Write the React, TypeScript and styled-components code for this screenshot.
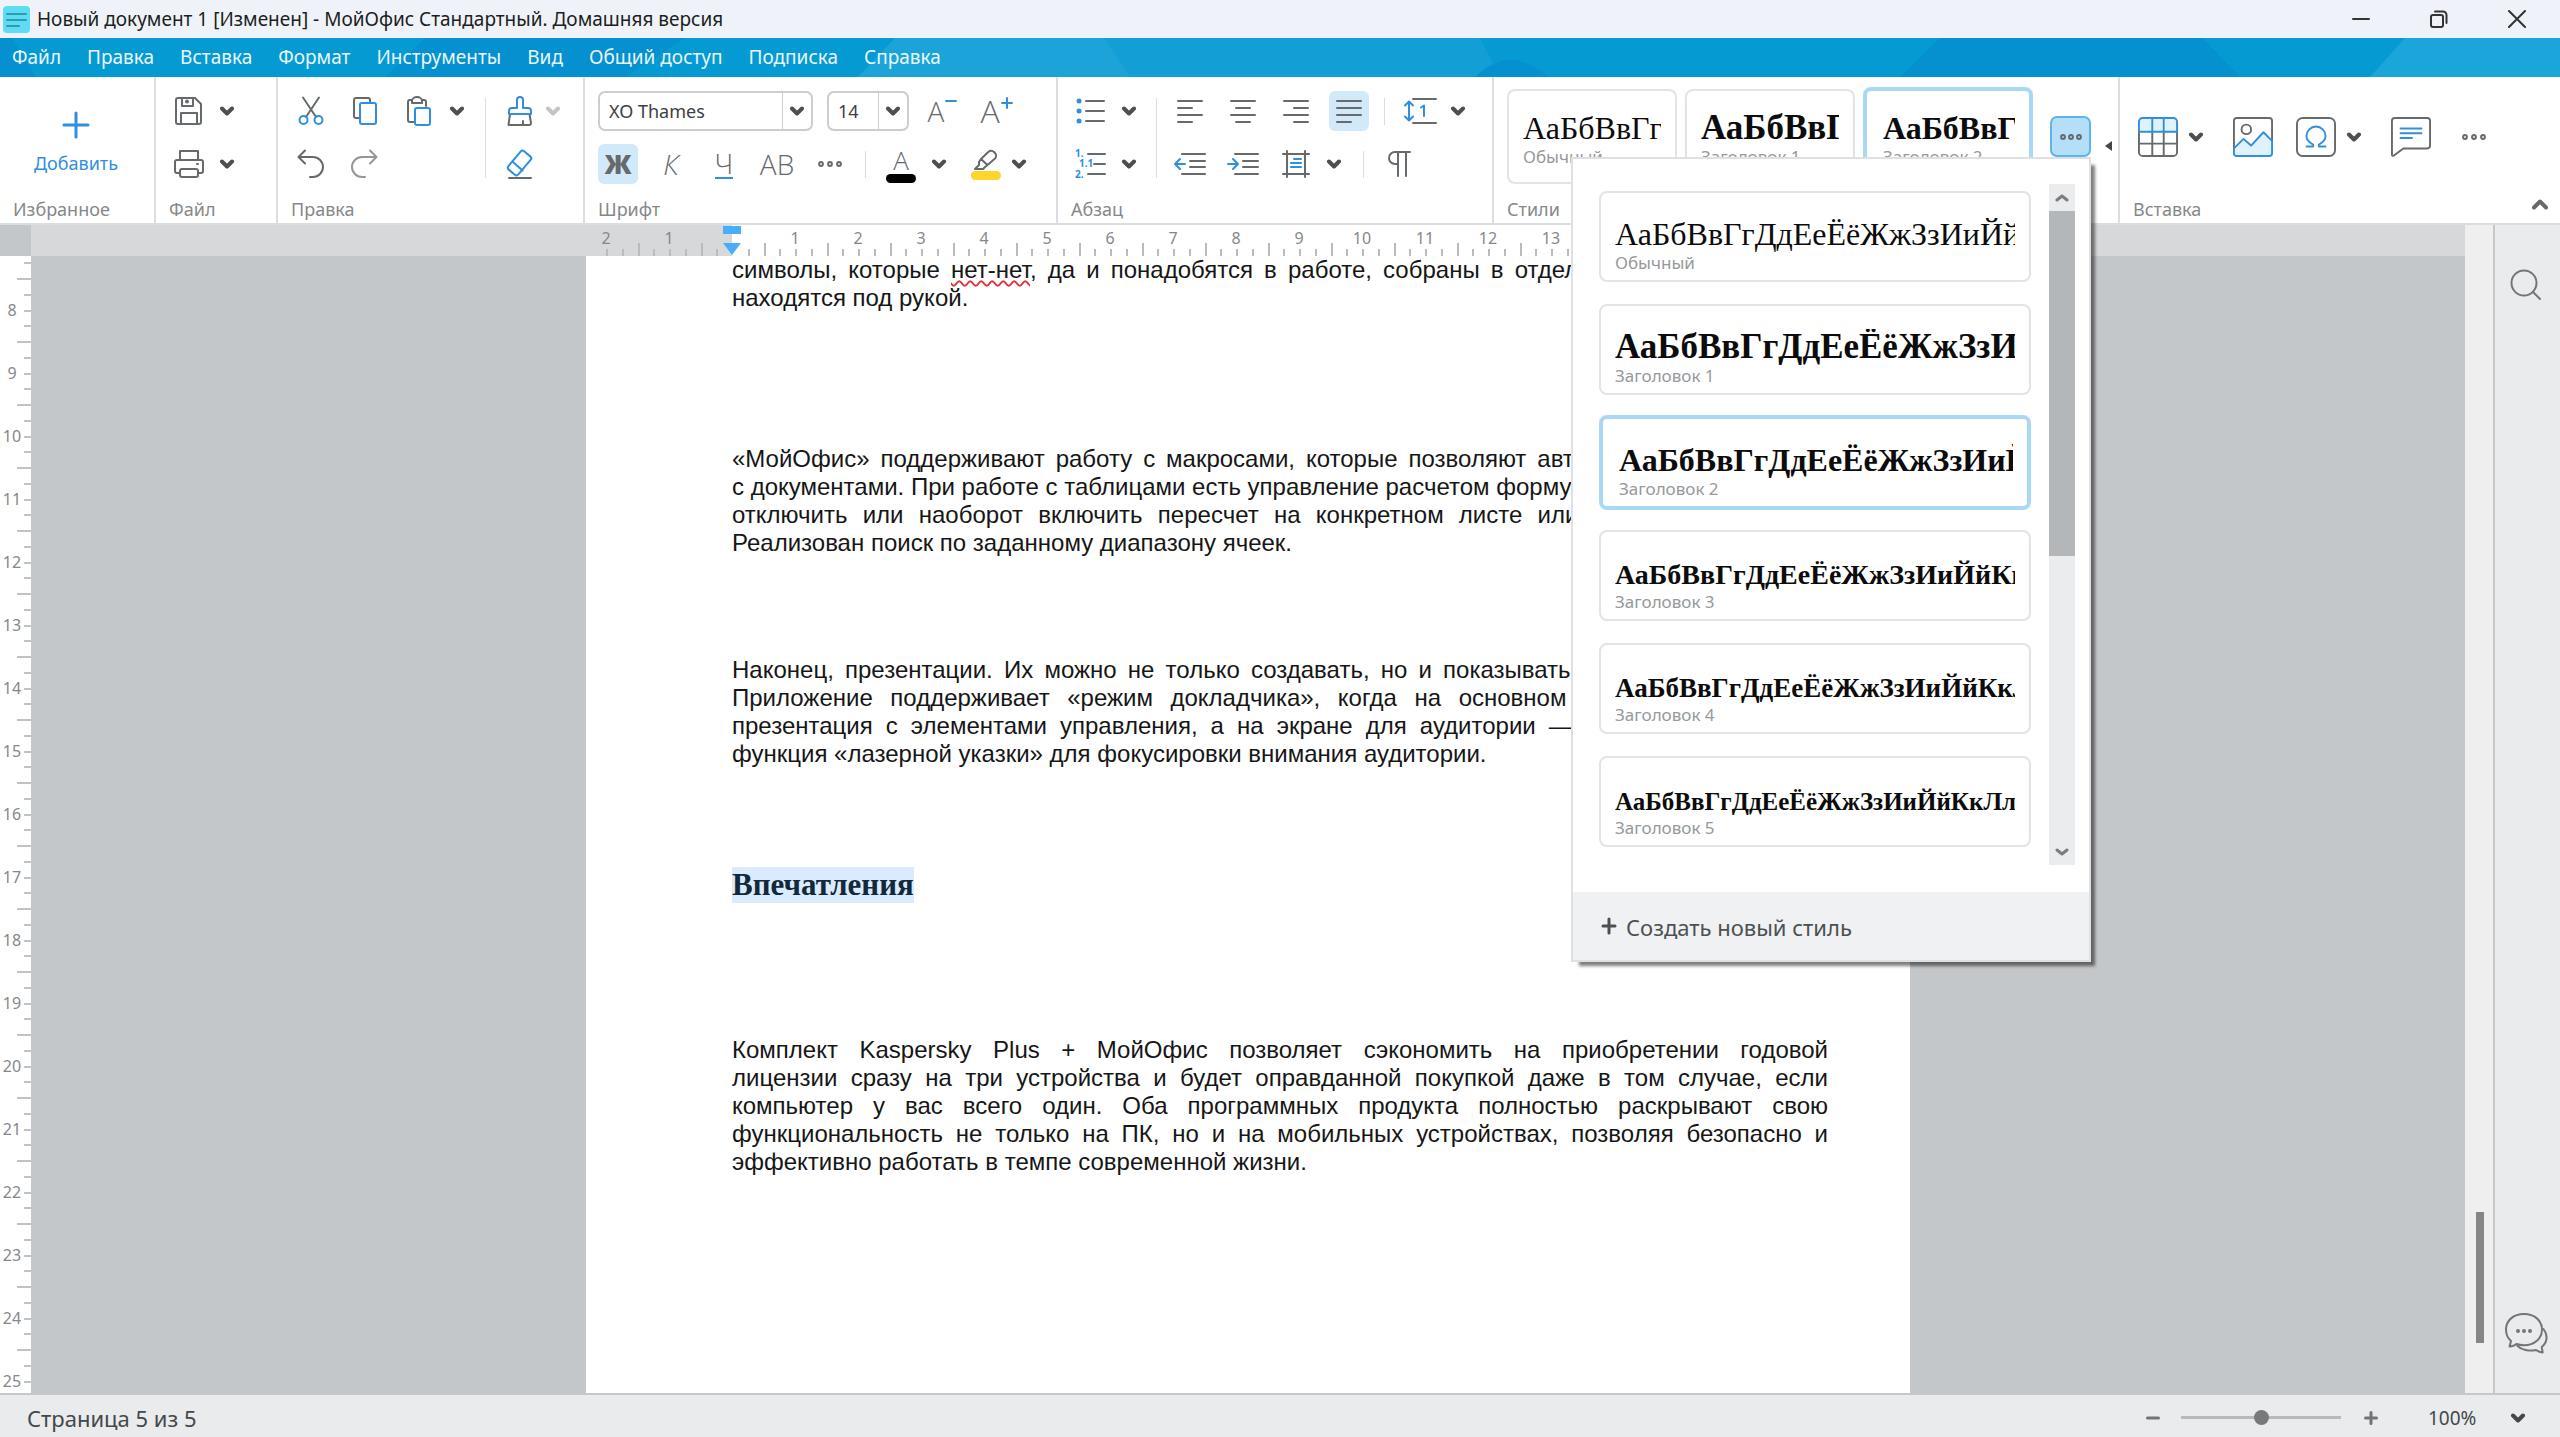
import React from "react";
import styled, { createGlobalStyle, css } from "styled-components";

const UI = `"Noto Sans", "Open Sans", sans-serif`;
const SERIF = `"Liberation Serif", "Times New Roman", serif`;
const SANS = `"Liberation Sans", Arial, sans-serif`;

const GRAY = "#666a6c";
const DARK = "#44484a";
const BLUE = "#2f8fdd";
const LINE = "#dcddde";

const CM = 63;

const GlobalStyle = createGlobalStyle`
  * { box-sizing: border-box; }
  body { margin: 0; font-family: ${UI}; color: #333; overflow: hidden; }
  button, select, input { font: inherit; color: inherit; margin: 0; padding: 0; border: 0; background: none; }
`;

const Window = styled.div`
  display: flex;
  flex-direction: column;
  height: 100vh;
  background: #fff;
`;

/* ---------- title bar ---------- */

const TitleBar = styled.header`
  display: flex;
  align-items: center;
  height: 38px;
  padding: 0 4px 0 3px;
  gap: 7px;
  background: #eff3f9;
`;

const Title = styled.h1`
  flex: 1;
  margin: 0;
  font-size: 19px;
  font-weight: 400;
  line-height: 24px;
  color: #1c1e20;
`;

const WindowButton = styled.button`
  display: flex;
  align-items: center;
  justify-content: center;
  width: 78px;
  height: 38px;
`;

/* ---------- menu ---------- */

const MenuBar = styled.nav`
  position: relative;
  display: flex;
  align-items: center;
  gap: 26px;
  height: 39px;
  padding: 0 12px 1px;
  background: #069ad3;
`;

const MenuPattern = styled.svg`
  position: absolute;
  inset: 0;
  width: 100%;
  height: 100%;
`;

const MenuItem = styled.button`
  position: relative;
  font-size: 19px;
  line-height: 24px;
  color: #e9f7fd;
`;

/* ---------- ribbon ---------- */

const Ribbon = styled.section`
  position: relative;
  z-index: 2;
  display: flex;
  height: 148px;
  background: #fff;
  border-bottom: 2px solid ${LINE};
`;

const Group = styled.div<{ $end?: number; $grow?: boolean }>`
  display: flex;
  flex-direction: column;
  justify-content: space-between;
  padding: 12px ${(p) => p.$end ?? 15}px 0 13px;
  ${(p) => p.$grow && "flex: 1;"}
  & + & { border-left: 2px solid ${LINE}; }
`;

const GroupBody = styled.div<{ $align?: string; $gap?: number; $inset?: number }>`
  display: flex;
  align-items: ${(p) => p.$align ?? "flex-end"};
  gap: ${(p) => p.$gap ?? 13}px;
  height: 95px;
  padding-left: ${(p) => p.$inset ?? 0}px;
`;

const GroupFoot = styled.div`
  display: flex;
  justify-content: space-between;
  align-items: center;
  height: 38px;
`;

const GroupLabel = styled.span`
  font-size: 18px;
  line-height: 24px;
  padding-top: 10px;
  color: #85888a;
`;

const Rows = styled.div`
  display: flex;
  flex-direction: column;
  gap: 13px;
`;

const Row = styled.div<{ $gap?: number }>`
  display: flex;
  align-items: center;
  gap: ${(p) => p.$gap ?? 13}px;
  height: 40px;
`;

const Tool = styled.button<{ $on?: boolean }>`
  display: flex;
  align-items: center;
  justify-content: center;
  flex: none;
  width: 40px;
  height: 40px;
  border-radius: 6px;
  color: ${GRAY};
  ${(p) => p.$on && css`background: #d1e9f9;`}
`;

const Split = styled.div`
  display: flex;
`;

const Drop = styled.button<{ $tight?: boolean; $dim?: boolean }>`
  display: flex;
  align-items: center;
  justify-content: center;
  width: ${(p) => (p.$tight ? 26 : 32)}px;
  height: 40px;
  padding-left: ${(p) => (p.$tight ? 0 : 4)}px;
  color: ${(p) => (p.$dim ? "#c3c5c6" : "#4b4f51")};
`;

const Rule = styled.i<{ $tall?: boolean }>`
  flex: none;
  width: 1px;
  height: ${(p) => (p.$tall ? 80 : 27)}px;
  margin: ${(p) => (p.$tall ? "0 0 6px" : "0 2px")};
  background: ${LINE};
`;

const AddButton = styled.button`
  display: flex;
  flex-direction: column;
  align-items: center;
  gap: 12px;
  width: 126px;
  padding-top: 12px;
  font-size: 18px;
  line-height: 24px;
  color: ${BLUE};
`;

const Glyph = styled.span<{ $size?: number; $bold?: boolean; $italic?: boolean; $under?: boolean }>`
  font-family: "Open Sans", "Noto Sans", sans-serif;
  font-size: ${(p) => p.$size ?? 28}px;
  line-height: 28px;
  font-weight: ${(p) => (p.$bold ? 800 : 300)};
  font-style: ${(p) => (p.$italic ? "italic" : "normal")};
  ${(p) => p.$under && `border-bottom: 2px solid ${BLUE};`}
`;

const SizeGlyph = styled.span`
  display: flex;
  align-items: flex-start;
`;

const ColorGlyph = styled.span<{ $color: string }>`
  display: flex;
  flex-direction: column;
  align-items: center;
  &::after {
    content: "";
    width: 30px;
    height: 9px;
    border-radius: 5px;
    background: ${(p) => p.$color};
  }
`;

const Combo = styled.label<{ $width: number }>`
  display: flex;
  align-items: center;
  width: ${(p) => p.$width}px;
  height: 40px;
  border: 2px solid #cbcdce;
  border-radius: 7px;
  color: #4b4f51;
`;

const ComboSelect = styled.select`
  flex: 1;
  min-width: 0;
  height: 100%;
  padding-left: 9px;
  appearance: none;
  border-right: 1px solid #cbcdce;
  font-size: 18px;
  color: #3c4042;
`;

const ComboArrow = styled.span`
  display: flex;
  justify-content: center;
  width: 28px;
`;

/* ---------- style cards ---------- */

const Card = styled.button<{ $compact?: boolean; $on?: boolean }>`
  display: flex;
  flex-direction: column;
  justify-content: flex-end;
  flex: none;
  width: ${(p) => (p.$compact ? "170px" : "100%")};
  height: ${(p) => (p.$compact ? 95 : 91)}px;
  padding: 0 14px ${(p) => (p.$compact ? 14 : 6)}px;
  border: 2px solid #e2e4e5;
  border-radius: 8px;
  text-align: left;
  background: #fff;
  ${(p) => p.$on && css`
    height: ${p.$compact ? 99 : 95}px;
    margin: -2px 0;
    padding-left: 16px;
    border: 4px solid #a9d8f5;
  `}
`;

const Sample = styled.span`
  width: 100%;
  overflow: hidden;
  white-space: nowrap;
  font-family: ${SERIF};
  font-size: 32px;
  line-height: 36px;
  color: #0c0c0c;
`;

const SampleText = styled.span<{ $size: number; $bold: boolean }>`
  font-size: ${(p) => p.$size}px;
  line-height: 1;
  font-weight: ${(p) => (p.$bold ? 700 : 400)};
`;

const CardLabel = styled.span`
  font-size: 17px;
  line-height: 22px;
  color: #96999b;
`;

const PopupAnchor = styled.div`
  position: relative;
  margin: 0 6px 0 9px;
`;

const MoreStyles = styled.button`
  display: flex;
  align-items: center;
  justify-content: center;
  width: 41px;
  height: 41px;
  border: 2px solid #5db4ef;
  border-radius: 7px;
  background: #b5dff9;
  color: ${GRAY};
`;

const StylesPopup = styled.div`
  position: absolute;
  top: 100%;
  right: 0;
  width: 520px;
  background: #fff;
  border: 2px solid #dfe0e1;
  box-shadow: 6px 6px 3px -2px rgba(0, 0, 0, 0.5);
`;

const PopupBody = styled.div`
  display: flex;
  gap: 18px;
  height: 733px;
  padding: 25px 14px 27px 26px;
`;

const CardList = styled.div`
  display: flex;
  flex-direction: column;
  flex: 1;
  gap: 22px;
  min-width: 0;
  padding-top: 7px;
`;

const ListScroll = styled.div`
  display: flex;
  flex-direction: column;
  width: 26px;
  background: #ebecee;
`;

const ScrollArrow = styled.button`
  display: flex;
  align-items: center;
  justify-content: center;
  height: 27px;
  color: #7b7e80;
`;

const ListThumb = styled.div`
  flex: 1;
  &::before {
    content: "";
    display: block;
    height: 55%;
    background: #b4b7b9;
  }
`;

const NewStyle = styled.button`
  display: flex;
  align-items: center;
  gap: 9px;
  width: 100%;
  height: 68px;
  padding: 2px 28px 0;
  background: #f0f1f2;
  font-size: 22px;
  line-height: 30px;
  color: #4c5052;
`;

/* ---------- workspace ---------- */

const Workspace = styled.main`
  display: flex;
  flex: 1;
  min-height: 0;
`;

const Editor = styled.section`
  display: grid;
  grid-template-columns: 31px 1fr;
  grid-template-rows: 31px 1fr;
  flex: 1;
  min-width: 0;
  background: #c4c7ca;
`;

const TopRuler = styled.div`
  display: flex;
  justify-content: center;
  background: #d6d8da;
  overflow: hidden;
`;

const RulerZone = styled.div<{ $width: number; $page?: boolean }>`
  display: flex;
  flex: none;
  justify-content: ${(p) => (p.$page ? "flex-start" : "flex-end")};
  width: ${(p) => p.$width}px;
  overflow: hidden;
  background: ${(p) => (p.$page ? "#fff" : "transparent")};
`;

const RulerMarker = styled.svg`
  flex: none;
  position: relative;
  width: 18px;
  height: 30px;
  margin: 0 -9px;
  z-index: 1;
`;

const Cell = styled.div<{ $half?: boolean }>`
  display: flex;
  flex-direction: column;
  justify-content: space-between;
  flex: none;
  width: ${(p) => (p.$half ? CM / 2 : CM)}px;
`;

const CellNumber = styled.span`
  font-size: 16px;
  line-height: 18px;
  padding-top: 4px;
  text-align: center;
  color: #85888a;
`;

const Ticks = styled.div`
  display: flex;
  align-items: flex-end;
  height: 13px;
  margin-top: -4px;
`;

const Tick = styled.i<{ $long?: boolean; $off?: boolean }>`
  flex: 1;
  height: ${(p) => (p.$long ? 13 : 7)}px;
  border-left: 2px solid ${(p) => (p.$off ? "transparent" : "#b9bcbe")};
`;

const SideRuler = styled.div`
  display: flex;
  flex-direction: column;
  background: #fff;
  overflow: hidden;
  min-height: 0;
  &::before {
    content: "";
    flex: none;
    height: 22px;
    margin-bottom: -${CM}px;
  }
`;

const SideCell = styled.div`
  display: flex;
  align-items: center;
  flex: none;
  height: ${CM}px;
`;

const SideNumber = styled.span`
  width: 24px;
  flex: none;
  text-align: center;
  font-size: 16px;
  line-height: 18px;
  color: #85888a;
`;

const SideTicks = styled.div`
  display: flex;
  flex-direction: column;
  align-items: flex-end;
  align-self: stretch;
  margin-left: -7px;
  width: 14px;
`;

const SideTick = styled.i<{ $long?: boolean }>`
  flex: 1;
  width: ${(p) => (p.$long ? 14 : 7)}px;
  border-top: 2px solid #c0c3c5;
`;

const Canvas = styled.div`
  display: flex;
  justify-content: center;
  overflow: hidden;
  min-height: 0;
`;

const Page = styled.article`
  flex: none;
  width: 1324px;
  padding: 0 82px 0 146px;
  background: #fff;
  font-family: ${SANS};
  font-size: 24px;
  line-height: 28px;
  color: #161616;
`;

const Paragraph = styled.p<{ $space?: number }>`
  margin: 0 0 ${(p) => p.$space ?? 99}px;
`;

const TextLine = styled.span`
  display: block;
  white-space: nowrap;
  text-align-last: justify;
  &:last-child { text-align-last: left; }
`;

const Misspelt = styled.span`
  text-decoration: underline wavy #e0343c 2px;
  text-underline-offset: 2px;
  text-decoration-skip-ink: none;
`;

const Heading = styled.h2`
  margin: 0 0 133px;
  font-family: ${SERIF};
  font-size: 31px;
  line-height: 36px;
  font-weight: 700;
  color: #12283b;
`;

const Selected = styled.span`
  display: inline-block;
  background: #d9ebfc;
`;

const PageScroll = styled.div`
  display: flex;
  flex-direction: column;
  justify-content: flex-end;
  align-items: center;
  flex: none;
  width: 28px;
  padding: 0 0 50px 2px;
  background: #efefef;
  &::after {
    content: "";
    width: 8px;
    height: 131px;
    background: #868686;
  }
`;

const SidePanel = styled.aside`
  display: flex;
  flex-direction: column;
  align-items: center;
  justify-content: space-between;
  flex: none;
  width: 67px;
  padding: 38px 4px 37px 0;
  border-left: 2px solid #c5c7c9;
  background: #e9ebed;
`;

const SideButton = styled.button`
  display: flex;
  align-items: center;
  justify-content: center;
  width: 46px;
  height: 46px;
  color: #727678;
`;

/* ---------- status bar ---------- */

const StatusBar = styled.footer`
  display: flex;
  align-items: center;
  height: 44px;
  padding: 3px 34px 0 27px;
  border-top: 2px solid #c5c7c9;
  background: #e9ebed;
  color: ${DARK};
`;

const PageInfo = styled.span`
  flex: 1;
  font-size: 22px;
  line-height: 30px;
`;

const ZoomStep = styled.button`
  display: flex;
  color: #707476;
`;

const ZoomRange = styled.input`
  width: 160px;
  height: 16px;
  margin: 0 23px 0 21px;
  appearance: none;
  &::-webkit-slider-runnable-track { height: 3px; background: #b7babc; }
  &::-webkit-slider-thumb {
    appearance: none;
    width: 15px;
    height: 15px;
    margin-top: -6px;
    border-radius: 50%;
    background: #77797b;
  }
`;

const ZoomLabel = styled.label`
  display: flex;
  align-items: center;
  margin-left: 50px;
`;

const ZoomSelect = styled.select`
  width: 82px;
  appearance: none;
  font-size: 19px;
  line-height: 26px;
`;

/* ---------- icons ---------- */

type IconProps = { w?: number; h?: number; sw?: number; children: React.ReactNode };

const Icon = ({ w = 30, h = 30, sw = 2, children }: IconProps) => (
  <svg width={w} height={h} viewBox={`0 0 ${w} ${h}`} fill="none" stroke="currentColor" strokeWidth={sw}
    strokeLinecap="round" strokeLinejoin="round" aria-hidden="true">
    {children}
  </svg>
);

const Chevron = () => (
  <Icon w={16} h={10} sw={4}><path d="M3 2.5 8 7.5 13 2.5" /></Icon>
);

const Dots = ({ s = 8 }: { s?: number }) => (
  <Icon w={26} h={8} sw={2}>
    {[13 - s - 1, 13, 13 + s + 1].map((x) => <circle key={x} cx={x} cy="4" r="1.9" />)}
  </Icon>
);

const SaveIcon = () => (
  <Icon>
    <path d="M4 2h17l6 6v18a2 2 0 0 1-2 2H4a2 2 0 0 1-2-2V4a2 2 0 0 1 2-2z" />
    <path d="M7 28V17h16v11M8 2v8h11V2" /><circle cx="13" cy="5.5" r="1" />
  </Icon>
);
const PrintIcon = () => (
  <Icon w={32}>
    <path d="M7 10V2h18v8M7 24H4a2 2 0 0 1-2-2v-9a2 2 0 0 1 2-2h24a2 2 0 0 1 2 2v9a2 2 0 0 1-2 2h-3" />
    <rect x="7" y="20" width="18" height="8" rx="2" /><path d="M24 15h1" />
  </Icon>
);
const CutIcon = () => (
  <Icon>
    <path d="M7 1.500 20 21M23 1.500 10 21" />
    <g stroke={BLUE}><circle cx="7.500" cy="24" r="4" /><circle cx="22.500" cy="24" r="4" /></g>
  </Icon>
);
const CopyIcon = () => (
  <Icon>
    <path d="M9 22H6a2 2 0 0 1-2-2V4a2 2 0 0 1 2-2h12a2 2 0 0 1 2 2v2" />
    <rect x="10" y="7" width="16" height="21" rx="2" stroke={BLUE} />
  </Icon>
);
const PasteIcon = () => (
  <Icon>
    <path d="M10 26H6a2 2 0 0 1-2-2V6a2 2 0 0 1 2-2h2M18 4h2a2 2 0 0 1 2 2v4" />
    <path d="M8 7V5a5 4 0 0 1 10 0v2z" />
    <rect x="11" y="12" width="15" height="17" rx="2" stroke={BLUE} />
  </Icon>
);
const BrushIcon = () => (
  <Icon h={32}>
    <path d="M5 19 3.500 30H24q2 0 2-2l-1.500-9M18 30v-4" />
    <path stroke={BLUE} d="M4 19v-3q0-3 3-3h5V5a3 3 0 0 1 6 0v8h5q3 0 3 3v3z" />
  </Icon>
);
const EraserIcon = () => (
  <Icon>
    <g stroke={BLUE}>
      <rect x="8" y="2" width="13" height="24" rx="2.500" transform="rotate(40 14.500 14)" />
      <path d="m8 13 9.500 8.500" />
    </g>
    <path d="M4 29h22" />
  </Icon>
);
const UndoIcon = ({ flip }: { flip?: boolean }) => (
  <Icon>
    <g transform={flip ? "translate(30 0) scale(-1 1)" : undefined} opacity={flip ? 0.7 : 1}>
      <path d="M9 1.500 2.500 8 9 14.500M2.500 8H17a10 10 0 0 1 0 20h-3" />
    </g>
  </Icon>
);
const MarkerIcon = () => (
  <Icon w={26} h={22}>
    <path d="M8 10 15.500 2.800a4 4 0 0 1 5.500.2l1 1a4 4 0 0 1 0 5.500L14.500 16zM8 10l-2 3v3l-4 4h8l2-2 2.500-2" />
  </Icon>
);
const AlignIcon = ({ rows }: { rows: [number, number][] }) => (
  <Icon w={28} h={26} sw={2}>
    {rows.map(([a, b], i) => <path key={i} d={`M${a} ${3 + i * 7}H${b}`} />)}
  </Icon>
);
const BulletsIcon = () => (
  <Icon w={32}>
    {[5, 15, 25].map((y) => (
      <g key={y}><circle cx="4" cy={y} r="2.500" fill={BLUE} stroke="none" /><path d={`M11 ${y}h18`} /></g>
    ))}
  </Icon>
);

const NumberMark = styled.text`
  font: 700 10px ${UI};
  fill: ${BLUE};
  stroke: none;
`;

const NumbersIcon = () => (
  <Icon w={34}>
    <path d="M14 5h17M20 15h11M14 25h17" />
    <NumberMark x="1" y="8">1.</NumberMark>
    <NumberMark x="5" y="18">1.1</NumberMark>
    <NumberMark x="1" y="29">2.</NumberMark>
  </Icon>
);
const IndentIcon = ({ out }: { out?: boolean }) => (
  <Icon w={34} h={26}>
    <path d="M9 3h23M17 10h15M17 16h15M9 23h23" />
    <path stroke={BLUE} d={out ? "M12 13H2M7 8 2 13l5 5" : "M2 13h10M7 8l5 5-5 5"} />
  </Icon>
);
const FrameIcon = () => (
  <Icon>
    <path d="M6 2v26M24 2v26M2 5h26M2 25h26" />
    <path stroke={BLUE} d="M13 10h7M10 14h10M10 18h10" />
  </Icon>
);
const SpacingIcon = () => (
  <Icon w={36}>
    <path d="M11 3h23M11 27h23" />
    <path stroke={BLUE} d="M7 6v18M3 9.500 7 5.500l4 4M3 20.500l4 4 4-4M19 11.500l3-2V20" />
  </Icon>
);
const PilcrowIcon = () => (
  <Icon><path d="M26 3H11a6 6 0 0 0 0 12h3M14 3v24M22 3v24" /></Icon>
);
const TableIcon = () => (
  <Icon w={42} h={42}>
    <path fill="#e0f2fd" stroke="none" d="M2 2h38v13H2z" />
    <path d="M1 15v22a4 4 0 0 0 4 4h32a4 4 0 0 0 4-4V15M1 28h40M15 16v25M27 16v25" />
    <path stroke={BLUE} d="M1 15.500V5a4 4 0 0 1 4-4h32a4 4 0 0 1 4 4v10.500zM15 1v14M27 1v14" />
  </Icon>
);
const ImageIcon = () => (
  <Icon w={42} h={42}>
    <path fill="#e0f2fd" stroke="none" d="M2 32 11 23l8 7 13-14 9 9v15H2z" />
    <path d="M1 32V4a3 3 0 0 1 3-3h34a3 3 0 0 1 3 3v20" />
    <circle cx="14" cy="13" r="5" />
    <path stroke={BLUE} d="M1 33 11 23l8 7L32 16l9 9v13a3 3 0 0 1-3 3H4a3 3 0 0 1-3-3z" />
  </Icon>
);
const OmegaIcon = () => (
  <Icon w={42} h={42}>
    <rect x="1" y="1" width="40" height="40" rx="6" />
    <path stroke={BLUE} d="M11 31h7v-2c-4-2-7-5-7-9a10 10 0 0 1 20 0c0 4-3 7-7 9v2h7" />
  </Icon>
);
const CommentIcon = () => (
  <Icon w={42} h={42}>
    <path d="M4 1h34a3 3 0 0 1 3 3v26a3 3 0 0 1-3 3H13L3 40.500q-2 1-2-1V4a3 3 0 0 1 3-3z" />
    <path stroke={BLUE} d="M10 12h22M10 17h22M10 22h12" />
  </Icon>
);

/* ---------- data ---------- */

const MENU = ["Файл", "Правка", "Вставка", "Формат", "Инструменты", "Вид", "Общий доступ", "Подписка", "Справка"];

const STYLES = [
  { name: "Обычный", size: 32, bold: false },
  { name: "Заголовок 1", size: 35, bold: true },
  { name: "Заголовок 2", size: 32, bold: true },
  { name: "Заголовок 3", size: 28, bold: true },
  { name: "Заголовок 4", size: 27, bold: true },
  { name: "Заголовок 5", size: 25, bold: true },
];
const ALPHABET = "АаБбВвГгДдЕеЁёЖжЗзИиЙйКкЛлМм";

const ALIGN: { name: string; rows: [number, number][] }[] = [
  { name: "По левому краю", rows: [[2, 26], [2, 16], [2, 26], [2, 16]] },
  { name: "По центру", rows: [[2, 26], [7, 21], [2, 26], [7, 21]] },
  { name: "По правому краю", rows: [[2, 26], [12, 26], [2, 26], [12, 26]] },
  { name: "По ширине", rows: [[2, 26], [2, 26], [2, 26], [2, 16]] },
];

const range = (a: number, b: number) => Array.from({ length: b - a + 1 }, (_, i) => a + i);

const StyleCard = ({ index, compact }: { index: number; compact?: boolean }) => {
  const s = STYLES[index];
  return (
    <Card $compact={compact} $on={index === 2}>
      <Sample><SampleText $size={s.size} $bold={s.bold}>{ALPHABET}</SampleText></Sample>
      <CardLabel>{s.name}</CardLabel>
    </Card>
  );
};

const SplitTool = ({ name, children, tight, dim }: { name: string; children: React.ReactNode; tight?: boolean; dim?: boolean }) => (
  <Split>
    <Tool aria-label={name}>{children}</Tool>
    <Drop aria-label={`${name}: варианты`} $tight={tight} $dim={dim}><Chevron /></Drop>
  </Split>
);

const RulerCell = ({ n, clipped }: { n: number; clipped?: boolean }) => (
  <Cell>
    <CellNumber>{Math.abs(n)}</CellNumber>
    <Ticks><Tick $long $off={clipped} /><Tick $off={clipped} /><Tick /><Tick /></Ticks>
  </Cell>
);

const StylesMenu = () => (
  <StylesPopup>
    <PopupBody>
      <CardList>{STYLES.map((s, i) => <StyleCard key={s.name} index={i} />)}</CardList>
      <ListScroll>
        <ScrollArrow aria-label="Вверх"><Icon w={14} h={8} sw={3}><path d="M2 6 7 2l5 4" /></Icon></ScrollArrow>
        <ListThumb />
        <ScrollArrow aria-label="Вниз"><Icon w={14} h={8} sw={3}><path d="m2 2 5 4 5-4" /></Icon></ScrollArrow>
      </ListScroll>
    </PopupBody>
    <NewStyle>
      <Icon w={16} h={20} sw={3}><path d="M8 2v14M2 9h12" /></Icon>
      Создать новый стиль
    </NewStyle>
  </StylesPopup>
);

const RibbonBar = () => (
  <Ribbon>
    <Group>
      <GroupBody $align="center">
        <AddButton>
          <Icon w={28} h={28} sw={3}><path d="M14 2v24M2 14h24" /></Icon>
          Добавить
        </AddButton>
      </GroupBody>
      <GroupFoot><GroupLabel>Избранное</GroupLabel></GroupFoot>
    </Group>

    <Group $end={35}>
      <GroupBody>
        <Rows>
          <SplitTool name="Сохранить"><SaveIcon /></SplitTool>
          <SplitTool name="Печать"><PrintIcon /></SplitTool>
        </Rows>
      </GroupBody>
      <GroupFoot><GroupLabel>Файл</GroupLabel></GroupFoot>
    </Group>

    <Group $end={17}>
      <GroupBody $gap={14}>
        <Rows>
          <Row $gap={14}>
            <Tool aria-label="Вырезать"><CutIcon /></Tool>
            <Tool aria-label="Копировать"><CopyIcon /></Tool>
            <SplitTool name="Вставить"><PasteIcon /></SplitTool>
          </Row>
          <Row>
            <Tool aria-label="Отменить"><UndoIcon /></Tool>
            <Tool aria-label="Повторить"><UndoIcon flip /></Tool>
          </Row>
        </Rows>
        <Rule $tall />
        <Rows>
          <SplitTool name="Формат по образцу" tight dim><BrushIcon /></SplitTool>
          <Tool aria-label="Очистить"><EraserIcon /></Tool>
        </Rows>
      </GroupBody>
      <GroupFoot><GroupLabel>Правка</GroupLabel></GroupFoot>
    </Group>

    <Group $end={24}>
      <GroupBody>
        <Rows>
          <Row $gap={14}>
            <Combo $width={215}>
              <ComboSelect aria-label="Шрифт"><option>XO Thames</option></ComboSelect>
              <ComboArrow><Chevron /></ComboArrow>
            </Combo>
            <Combo $width={82}>
              <ComboSelect aria-label="Размер"><option>14</option></ComboSelect>
              <ComboArrow><Chevron /></ComboArrow>
            </Combo>
            <Tool aria-label="Уменьшить">
              <SizeGlyph><Glyph $size={28}>A</Glyph><Icon w={14} h={14}><path stroke={BLUE} d="M2 4h10" /></Icon></SizeGlyph>
            </Tool>
            <Tool aria-label="Увеличить">
              <SizeGlyph><Glyph $size={32}>A</Glyph><Icon w={14} h={14}><path stroke={BLUE} d="M2 6h10M7 1v10" /></Icon></SizeGlyph>
            </Tool>
          </Row>
          <Row>
            <Tool $on><Glyph $bold $size={26}>Ж</Glyph></Tool>
            <Tool><Glyph $italic>К</Glyph></Tool>
            <Tool><Glyph $under>Ч</Glyph></Tool>
            <Tool><Glyph>АВ</Glyph></Tool>
            <Tool aria-label="Ещё"><Dots /></Tool>
            <Rule />
            <SplitTool name="Цвет текста"><ColorGlyph $color="#000"><Glyph $size={26}>A</Glyph></ColorGlyph></SplitTool>
            <SplitTool name="Цвет выделения" tight><ColorGlyph $color="#ffd52b"><MarkerIcon /></ColorGlyph></SplitTool>
          </Row>
        </Rows>
      </GroupBody>
      <GroupFoot><GroupLabel>Шрифт</GroupLabel></GroupFoot>
    </Group>

    <Group $end={20}>
      <GroupBody>
        <Rows>
          <SplitTool name="Маркированный список"><BulletsIcon /></SplitTool>
          <SplitTool name="Нумерованный список"><NumbersIcon /></SplitTool>
        </Rows>
        <Rule $tall />
        <Rows>
          <Row>
            {ALIGN.map((a, i) => <Tool key={a.name} aria-label={a.name} $on={i === 3}><AlignIcon rows={a.rows} /></Tool>)}
            <Rule />
            <SplitTool name="Межстрочный интервал"><SpacingIcon /></SplitTool>
          </Row>
          <Row>
            <Tool aria-label="Уменьшить отступ"><IndentIcon out /></Tool>
            <Tool aria-label="Увеличить отступ"><IndentIcon /></Tool>
            <SplitTool name="Границы"><FrameIcon /></SplitTool>
            <Rule />
            <Tool aria-label="Непечатаемые символы"><PilcrowIcon /></Tool>
          </Row>
        </Rows>
      </GroupBody>
      <GroupFoot><GroupLabel>Абзац</GroupLabel></GroupFoot>
    </Group>

    <Group $end={6}>
      <GroupBody $align="center" $gap={8}>
        {[0, 1, 2].map((i) => <StyleCard key={i} index={i} compact />)}
        <PopupAnchor>
          <MoreStyles aria-label="Все стили"><Dots s={7} /></MoreStyles>
          <StylesMenu />
        </PopupAnchor>
        <svg width="7" height="28" aria-hidden="true"><path d="M7 18v10L0 23z" fill={DARK} /></svg>
      </GroupBody>
      <GroupFoot><GroupLabel>Стили</GroupLabel></GroupFoot>
    </Group>

    <Group $end={0} $grow>
      <GroupBody $align="center" $gap={23} $inset={5}>
        <SplitTool name="Таблица"><TableIcon /></SplitTool>
        <Tool aria-label="Изображение"><ImageIcon /></Tool>
        <SplitTool name="Символ"><OmegaIcon /></SplitTool>
        <Tool aria-label="Комментарий"><CommentIcon /></Tool>
        <Tool aria-label="Ещё"><Dots /></Tool>
      </GroupBody>
      <GroupFoot>
        <GroupLabel>Вставка</GroupLabel>
        <Tool aria-label="Свернуть ленту"><Icon w={18} h={12} sw={4}><path d="M3 9.500 9 3.500l6 6" /></Icon></Tool>
      </GroupFoot>
    </Group>
  </Ribbon>
);

const Document = () => (
  <Page>
    <Paragraph $space={133}>
      <TextLine>символы, которые <Misspelt>нет-нет</Misspelt>, да и понадобятся в работе, собраны в отдельном списке и всегда</TextLine>
      <TextLine>находятся под рукой.</TextLine>
    </Paragraph>
    <Paragraph>
      <TextLine>«МойОфис» поддерживают работу с макросами, которые позволяют автоматизировать работу</TextLine>
      <TextLine>с документами. При работе с таблицами есть управление расчетом формул: можно автоматически</TextLine>
      <TextLine>отключить или наоборот включить пересчет на конкретном листе или во всём документе.</TextLine>
      <TextLine>Реализован поиск по заданному диапазону ячеек.</TextLine>
    </Paragraph>
    <Paragraph>
      <TextLine>Наконец, презентации. Их можно не только создавать, но и показывать аудитории напрямую.</TextLine>
      <TextLine>Приложение поддерживает «режим докладчика», когда на основном дисплее отображена</TextLine>
      <TextLine>презентация с элементами управления, а на экране для аудитории — только слайды. Есть</TextLine>
      <TextLine>функция «лазерной указки» для фокусировки внимания аудитории.</TextLine>
    </Paragraph>
    <Heading><Selected>Впечатления</Selected></Heading>
    <Paragraph>
      <TextLine>Комплект Kaspersky Plus + МойОфис позволяет сэкономить на приобретении годовой</TextLine>
      <TextLine>лицензии сразу на три устройства и будет оправданной покупкой даже в том случае, если</TextLine>
      <TextLine>компьютер у вас всего один. Оба программных продукта полностью раскрывают свою</TextLine>
      <TextLine>функциональность не только на ПК, но и на мобильных устройствах, позволяя безопасно и</TextLine>
      <TextLine>эффективно работать в темпе современной жизни.</TextLine>
    </Paragraph>
  </Page>
);

export default function App() {
  return (
    <Window>
      <GlobalStyle />
      <TitleBar>
        <svg width="27" height="27" viewBox="0 0 27 27" aria-hidden="true">
          <rect width="27" height="27" rx="4" fill="#5fdcf3" />
          <path d="M4 8h19M4 14h19M4 20h12" stroke="#2a9db5" strokeWidth="2" strokeLinecap="round" />
        </svg>
        <Title>Новый документ 1 [Изменен] - МойОфис Стандартный. Домашняя версия</Title>
        <Split>
          <WindowButton aria-label="Свернуть"><Icon w={18} h={18}><path d="M1 9h16" /></Icon></WindowButton>
          <WindowButton aria-label="Восстановить">
            <Icon w={18} h={18}><rect x="1" y="5" width="12" height="12" rx="2" /><path d="M5 1.500h8a3.500 3.500 0 0 1 3.500 3.500v8" /></Icon>
          </WindowButton>
          <WindowButton aria-label="Закрыть"><Icon w={18} h={18}><path d="m1 1 16 16M17 1 1 17" /></Icon></WindowButton>
        </Split>
      </TitleBar>

      <MenuBar>
        <MenuPattern viewBox="0 0 2560 39" preserveAspectRatio="none" aria-hidden="true">
          <path fill="#0590cf" d="M0 0h12l24 39H0zM425 0h260l-60 39H385zM1940 0h262l38 39h-340z" />
          <path fill="#1ca4d9" d="M895 0h210l25 39H858z" />
          <path fill="#139ed5" d="M1105 0h375l20 39h-370z" />
          <path fill="#0590cf" d="M1475 39q36-34 72 0z" />
          <path fill="#1ca5d9" d="M2405 0h155v39h-190z" />
        </MenuPattern>
        {MENU.map((m) => <MenuItem key={m}>{m}</MenuItem>)}
      </MenuBar>

      <RibbonBar />

      <Workspace>
        <Editor>
          <div />
          <TopRuler>
            <RulerZone $width={146}>
              <RulerCell n={-2} clipped />
              <RulerCell n={-1} />
              <Cell $half><span /><Ticks><Tick $long /><Tick /></Ticks></Cell>
            </RulerZone>
            <RulerMarker viewBox="0 0 18 30" aria-hidden="true"><path fill="#49aef9" d="M0 1h18v8H0zM0 18h18l-9 12z" /></RulerMarker>
            <RulerZone $width={1096} $page>
              <Cell $half><span /><Ticks><Tick $off /><Tick /></Ticks></Cell>
              {range(1, 17).map((n) => <RulerCell key={n} n={n} />)}
            </RulerZone>
            <RulerZone $width={82} />
          </TopRuler>
          <SideRuler>
            {range(7, 25).map((n) => (
              <SideCell key={n}>
                <SideNumber>{n}</SideNumber>
                <SideTicks><SideTick $long /><SideTick /><SideTick /><SideTick /></SideTicks>
              </SideCell>
            ))}
          </SideRuler>
          <Canvas><Document /></Canvas>
        </Editor>
        <PageScroll />
        <SidePanel>
          <SideButton aria-label="Поиск">
            <Icon w={32} h={34}><circle cx="14" cy="14" r="12.500" /><path d="m23 23 7 7" /></Icon>
          </SideButton>
          <SideButton aria-label="Обратная связь">
            <Icon w={44} h={42}>
              <path d="M20 2C9.500 2 2 8.500 2 17.500c0 5.500 2 9 5 11.500l-1.500 5.500q5-.5 7-2.500 3 1.200 7.500 1.200c10.500 0 18-6.700 18-15.700S30.500 2 20 2z" />
              <path d="M39.500 17c5 6.500 3.500 14-1.800 18l1 5.500q-4-.5-6.700-2.500c-7 1.500-14.500 0-18.500-4" />
              {[14, 20, 26].map((x) => <circle key={x} cx={x} cy="19" r="1" />)}
            </Icon>
          </SideButton>
        </SidePanel>
      </Workspace>

      <StatusBar>
        <PageInfo>Страница 5 из 5</PageInfo>
        <ZoomStep aria-label="Уменьшить масштаб"><Icon w={14} h={14} sw={3}><path d="M1.500 7h11" /></Icon></ZoomStep>
        <ZoomRange type="range" min={0} max={100} defaultValue={50} aria-label="Масштаб" />
        <ZoomStep aria-label="Увеличить масштаб"><Icon w={14} h={14} sw={3}><path d="M1.500 7h11M7 1.500v11" /></Icon></ZoomStep>
        <ZoomLabel>
          <ZoomSelect aria-label="Масштаб страницы"><option>100%</option></ZoomSelect>
          <Chevron />
        </ZoomLabel>
      </StatusBar>
    </Window>
  );
}
